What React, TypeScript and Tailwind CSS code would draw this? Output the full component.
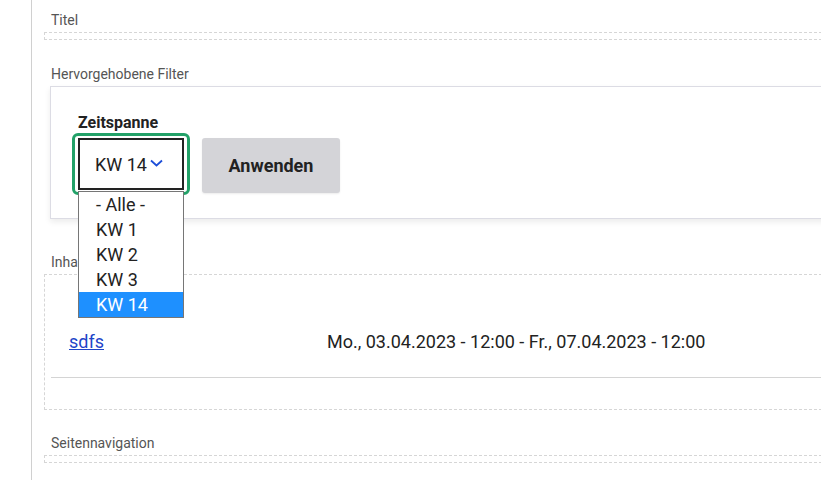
import React from "react";

export default function App() {
  const options = ["- Alle -", "KW 1", "KW 2", "KW 3", "KW 14"];
  return (
    <div className="w-[821px] h-[480px] overflow-hidden bg-white flex font-['Roboto',sans-serif]">
      <div className="flex-none w-[32px] h-full border-r border-[#d0d0d0]" />
      <div className="flex-none w-[800px] pl-[12px]">
        <div className="mt-[10px] pl-[7px] text-[14px] leading-[20px] text-[#555]">Titel</div>
        <div className="mt-[2px] h-[8px] border border-dashed border-[#d6d6d6]" />

        <div className="mt-[24px] pl-[7px] text-[14px] leading-[20px] text-[#555]">Hervorgehobene Filter</div>
        <div className="ml-[6px] mt-[2px] border border-[#dcdce4] bg-white shadow-[0_3px_6px_rgba(0,0,0,0.08)] pt-[26px] pl-[27px] pb-[23px]">
          <div className="text-[16px] font-bold leading-[20px] text-[#222]">Zeitspanne</div>
          <div className="flex items-start">
            <div className="relative -ml-[6px] border-[3px] border-[#22a168] rounded-[6px] px-[3px] py-[2px]">
              <div className="w-[106px] h-[52px] border-2 border-[#222] flex items-center pl-[15px] text-[18px] text-[#222] bg-white">
                <span>KW 14</span>
                <svg className="ml-[3px] -mt-[2px]" width="13" height="8" viewBox="0 0 13 8">
                  <polyline points="1,1.5 6.5,6.5 12,1.5" fill="none" stroke="#1d4ed8" strokeWidth="1.8" />
                </svg>
              </div>
              <div className="absolute z-10 left-[3px] top-[55px] w-[106px] border border-[#767676] bg-white text-[18px] leading-[25px] text-[#222]">
                {options.map((o) => (
                  <div
                    key={o}
                    className={o === "KW 14" ? "h-[25px] pl-[17px] bg-[#1e90ff] text-white" : "h-[25px] pl-[17px]"}
                  >
                    {o}
                  </div>
                ))}
              </div>
            </div>
            <button className="ml-[12px] mt-[5px] w-[138px] h-[55px] bg-[#d4d4d8] rounded-[3px] font-bold text-[18px] text-[#222] shadow-[0_1px_2px_rgba(0,0,0,0.08)]">
              Anwenden
            </button>
          </div>
        </div>

        <div className="mt-[33px] pl-[7px] text-[14px] leading-[20px] text-[#555]">Inhalt</div>
        <div className="mt-[2px] border border-dashed border-[#d6d6d6] pt-[31px] pb-[31px] pl-[6px]">
          <div className="flex py-[22px] border-b border-[#d4d4d4] text-[18px] leading-[27px] text-[#222]">
            <div className="w-[276px] pl-[18px]">
              <a href="#" className="text-[#1f45c8] underline">sdfs</a>
            </div>
            <div>Mo., 03.04.2023 - 12:00 - Fr., 07.04.2023 - 12:00</div>
          </div>
        </div>

        <div className="mt-[23px] pl-[7px] text-[14px] leading-[20px] text-[#555]">Seitennavigation</div>
        <div className="mt-[2px] h-[8px] border border-dashed border-[#d6d6d6]" />
      </div>
    </div>
  );
}
